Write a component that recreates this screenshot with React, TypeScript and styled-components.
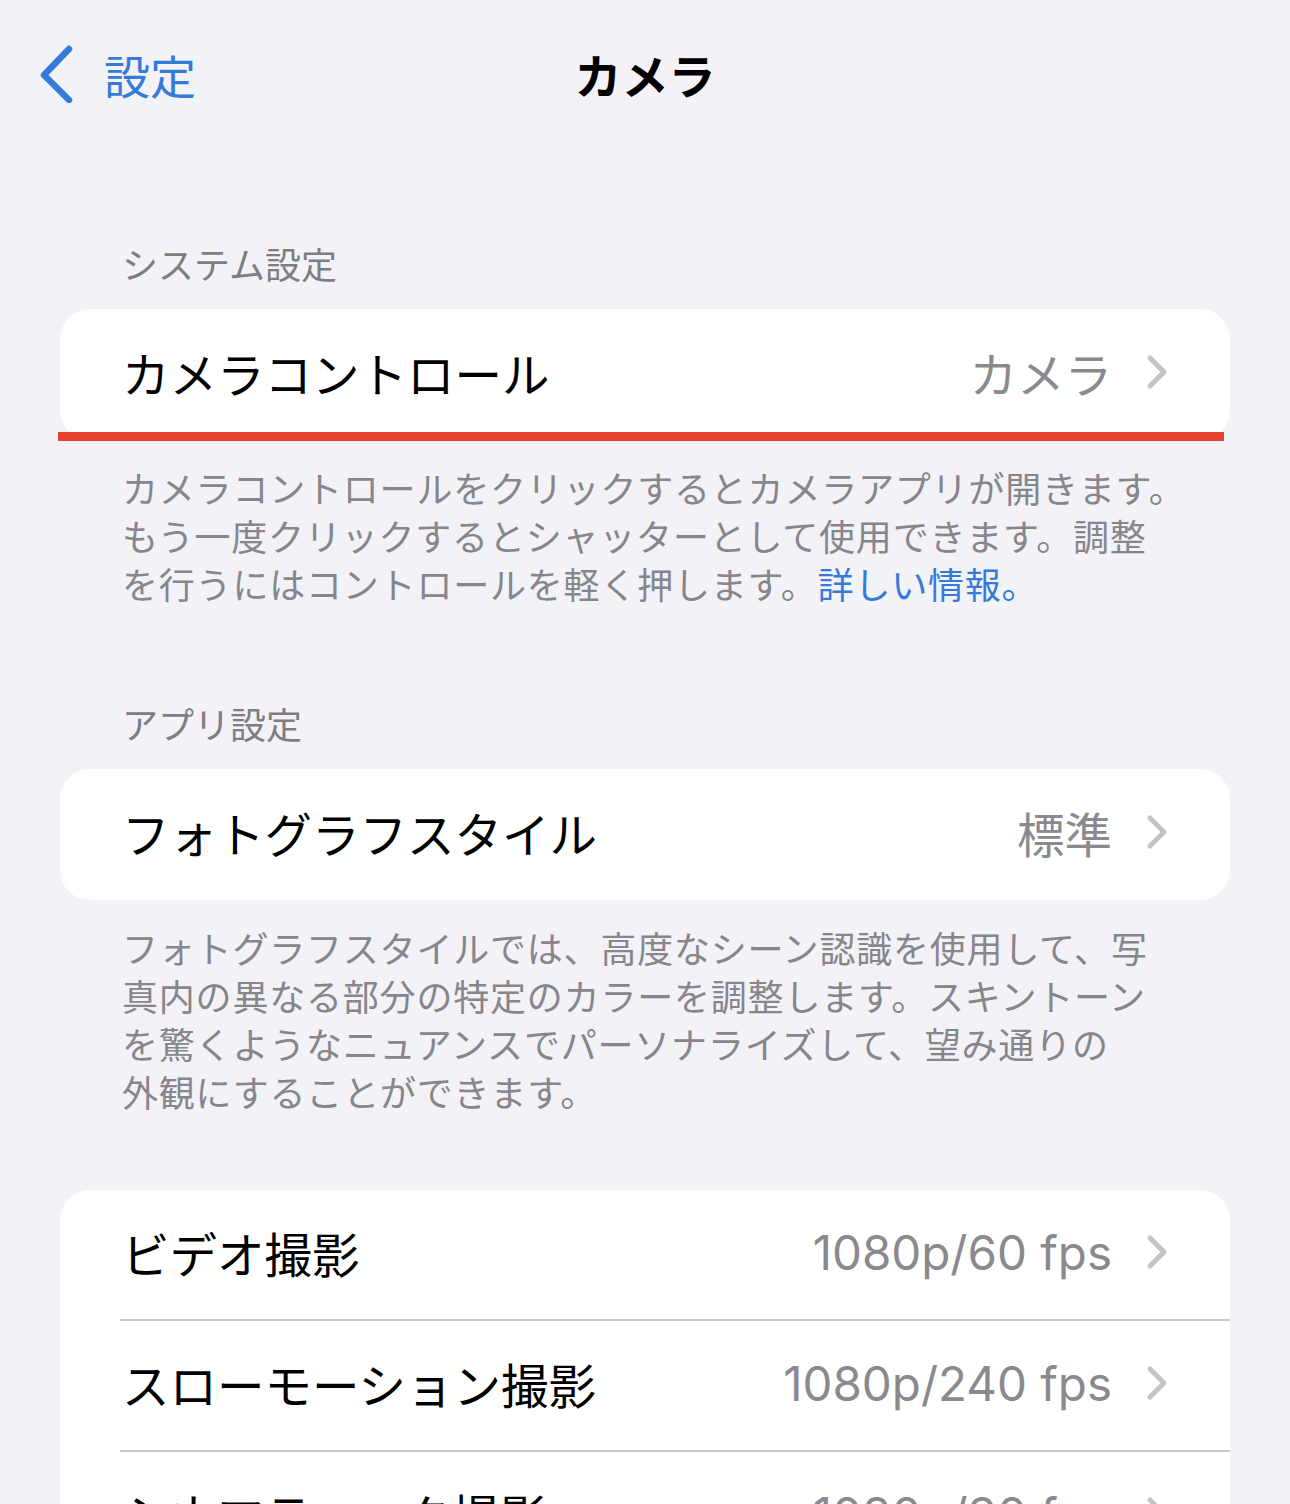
import React from 'react';
import styled, { createGlobalStyle } from 'styled-components';

const GlobalStyle = createGlobalStyle`
  html, body {
    margin: 0;
    padding: 0;
    background: #f2f2f7;
  }
  body {
    font-family: "Noto Sans CJK JP", "Noto Sans", sans-serif;
    -webkit-font-smoothing: antialiased;
  }
`;

const Page = styled.div`
  width: 1290px;
  min-height: 1504px;
  background: #f2f2f7;
  overflow: hidden;
`;

const NavBar = styled.div`
  position: relative;
  height: 148px;
  display: flex;
  align-items: center;
  justify-content: center;
`;

const BackButton = styled.div`
  position: absolute;
  left: 38px;
  top: 45px;
  display: flex;
  align-items: center;
  gap: 30px;
  color: #357ad8;
  font-size: 46px;
  line-height: 58px;
`;

const Title = styled.h1`
  margin: 0;
  font-size: 47px;
  font-weight: 700;
  color: #000;
  line-height: 58px;
`;

const Content = styled.div`
  padding: 0 60px;
  display: flex;
  flex-direction: column;
`;

const SectionHeader = styled.div<{ $top: number }>`
  margin-top: ${(p) => p.$top}px;
  padding-left: 62px;
  font-size: 36px;
  line-height: 48px;
  color: #7d7d82;
  margin-bottom: 22px;
`;

const CardWrap = styled.div`
  position: relative;
`;

const Card = styled.div<{ $top?: number }>`
  margin-top: ${(p) => p.$top ?? 0}px;
  background: #fff;
  border-radius: 30px;
  overflow: hidden;
`;

const Row = styled.div<{ $last?: boolean }>`
  height: 131px;
  box-sizing: border-box;
  margin-left: 60px;
  padding: 0 62px 5px 0;
  display: flex;
  align-items: center;
  justify-content: space-between;
  border-bottom: ${(p) => (p.$last ? 'none' : '2px solid #c8c8cc')};
`;

const RowLabel = styled.span`
  padding-left: 2px;
  font-size: 47.5px;
  color: #000;
  white-space: nowrap;
`;

const RowValue = styled.span`
  display: flex;
  align-items: center;
  gap: 34px;
  font-family: Inter, "Noto Sans CJK JP", sans-serif;
  font-size: 47.5px;
  color: #8a8a8e;
  white-space: nowrap;
`;

const Highlight = styled.div`
  position: absolute;
  left: -2px;
  right: 6px;
  bottom: -1px;
  height: 9px;
  background: #e5432d;
`;

const Footer = styled.div`
  padding: 23px 0 0 62px;
  font-size: 36px;
  line-height: 48px;
  letter-spacing: 0.8px;
  color: #86868b;
`;

const FooterLine = styled.div`
  white-space: nowrap;
`;

const Link = styled.span`
  color: #357ad8;
`;

const Chevron = () => (
  <svg width="22" height="36" viewBox="0 0 22 36">
    <path
      d="M4 4 L18 18 L4 32"
      fill="none"
      stroke="#c4c4c7"
      strokeWidth="5"
      strokeLinecap="round"
      strokeLinejoin="round"
    />
  </svg>
);

const BackChevron = () => (
  <svg width="36" height="58" viewBox="0 0 36 58">
    <path
      d="M31 4 L6 30 L31 55"
      fill="none"
      stroke="#357ad8"
      strokeWidth="6.5"
      strokeLinecap="round"
      strokeLinejoin="round"
    />
  </svg>
);

interface Item {
  label: string;
  value: string;
}

const videoItems: Item[] = [
  { label: 'ビデオ撮影', value: '1080p/60 fps' },
  { label: 'スローモーション撮影', value: '1080p/240 fps' },
  { label: 'シネマティック撮影', value: '1080p/30 fps' },
  { label: 'ステレオ音声録音', value: 'ステレオ' },
];

const App: React.FC = () => {
  return (
    <Page>
      <GlobalStyle />
      <NavBar>
        <BackButton>
          <BackChevron />
          <span>設定</span>
        </BackButton>
        <Title>カメラ</Title>
      </NavBar>

      <Content>
        <SectionHeader $top={91}>システム設定</SectionHeader>
        <CardWrap>
          <Card>
            <Row $last>
              <RowLabel>カメラコントロール</RowLabel>
              <RowValue>
                カメラ
                <Chevron />
              </RowValue>
            </Row>
          </Card>
          <Highlight />
        </CardWrap>
        <Footer>
          <FooterLine>カメラコントロールをクリックするとカメラアプリが開きます。</FooterLine>
          <FooterLine>もう一度クリックするとシャッターとして使用できます。調整</FooterLine>
          <FooterLine>
            を行うにはコントロールを軽く押します。<Link>詳しい情報。</Link>
          </FooterLine>
        </Footer>

        <SectionHeader $top={92}>アプリ設定</SectionHeader>
        <Card>
          <Row $last>
            <RowLabel>フォトグラフスタイル</RowLabel>
            <RowValue>
              標準
              <Chevron />
            </RowValue>
          </Row>
        </Card>
        <Footer>
          <FooterLine>フォトグラフスタイルでは、高度なシーン認識を使用して、写</FooterLine>
          <FooterLine>真内の異なる部分の特定のカラーを調整します。スキントーン</FooterLine>
          <FooterLine>を驚くようなニュアンスでパーソナライズして、望み通りの</FooterLine>
          <FooterLine>外観にすることができます。</FooterLine>
        </Footer>

        <Card $top={75}>
          {videoItems.map((item, i) => (
            <Row key={item.label} $last={i === videoItems.length - 1}>
              <RowLabel>{item.label}</RowLabel>
              <RowValue>
                {item.value}
                <Chevron />
              </RowValue>
            </Row>
          ))}
        </Card>
      </Content>
    </Page>
  );
};

export default App;
